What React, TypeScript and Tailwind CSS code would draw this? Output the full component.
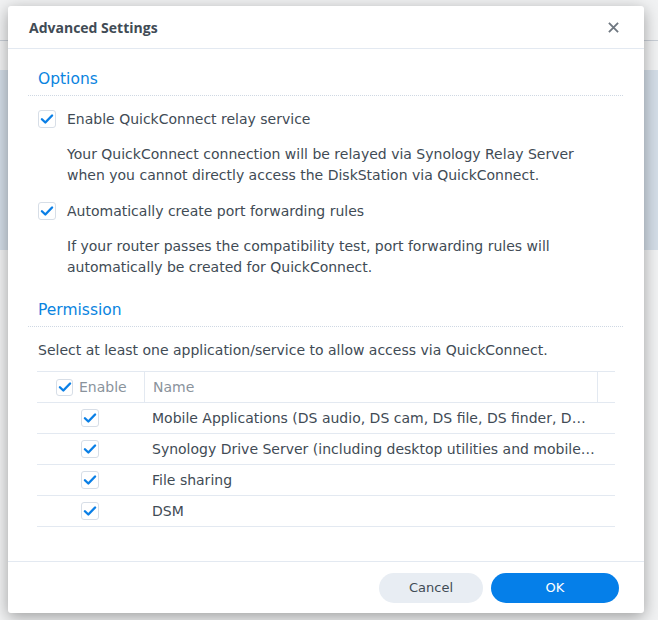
import React from "react";

const font = { fontFamily: '"DejaVu Sans", Verdana, sans-serif' };

const Check: React.FC<{ size?: string }> = ({ size = "w-[18px] h-[18px]" }) => (
	<span
		className={`${size} shrink-0 rounded-[3px] border border-[#d7dee7] bg-white flex items-center justify-center`}
	>
		<svg viewBox="0 0 16 16" className="w-[14px] h-[14px]">
			<path
				d="M2.2 8.3 L6.1 12 L13.8 4"
				fill="none"
				stroke="#0a7fe6"
				strokeWidth="2.7"
				strokeLinecap="round"
				strokeLinejoin="round"
			/>
		</svg>
	</span>
);

const options = [
	{
		label: "Enable QuickConnect relay service",
		desc: [
			"Your QuickConnect connection will be relayed via Synology Relay Server",
			"when you cannot directly access the DiskStation via QuickConnect.",
		],
		mb: "mb-[15px]",
	},
	{
		label: "Automatically create port forwarding rules",
		desc: [
			"If your router passes the compatibility test, port forwarding rules will",
			"automatically be created for QuickConnect.",
		],
		mb: "mb-[2px]",
	},
];

const apps = [
	{
		name: "Mobile Applications (DS audio, DS cam, DS file, DS finder, DS get, DS note, DS photo, DS video)",
		w: "w-[449px]",
	},
	{
		name: "Synology Drive Server (including desktop utilities and mobile applications)",
		w: "w-[452px]",
	},
	{ name: "File sharing", w: "w-[452px]" },
	{ name: "DSM", w: "w-[452px]" },
];

const Section: React.FC<{ title: string }> = ({ title }) => (
	<div className="pt-[18px]">
		<div className="text-[15.5px] leading-[24px] text-[#0a84e0] px-[10px]">{title}</div>
		<div className="mt-[4px] border-b border-dotted border-[#cfd8e3]" />
	</div>
);

export default function App() {
	return (
		<div
			className="relative w-[658px] h-[620px] bg-[#f1f2f3] overflow-hidden text-[#414b55]"
			style={font}
		>
			{/* page behind the dialog */}
			<div className="absolute left-0 right-0 top-[70px] h-[180px] bg-[#d3dde7]" />
			<div className="absolute left-0 right-0 top-[40px] border-t border-[#c8ced6]" />

			<div className="absolute left-[8px] top-[6px] w-[636px] h-[607px] bg-white rounded-[3px] shadow-[0_4px_16px_rgba(0,0,0,0.35)] flex flex-col">
				<div className="h-[43px] shrink-0 flex items-center justify-between pl-[21px] pr-[25px] border-b border-[#e3e9f1]">
					<span
						className="text-[14px] font-bold text-[#414b55]"
						style={{ fontFamily: '"Open Sans", sans-serif' }}
					>
						Advanced Settings
					</span>
					<svg viewBox="0 0 12 12" className="w-[11px] h-[11px]">
						<path d="M1 1 L11 11 M11 1 L1 11" stroke="#6f7780" strokeWidth="2" />
					</svg>
				</div>

				<div className="flex-1 pl-[20px] pr-[21px] text-[14px]">
					<Section title="Options" />
					<div className="px-[10px] pt-[13px]">
						{options.map((o) => (
							<div key={o.label} className={o.mb}>
								<div className="flex items-center gap-[11px] h-[20px]">
									<Check />
									<span className="text-[#414b55]">{o.label}</span>
								</div>
								<div className="pl-[29px] mt-[15px] leading-[21px] text-[#414b55]">
									{o.desc.map((d) => (
										<div key={d}>{d}</div>
									))}
								</div>
							</div>
						))}
					</div>

					<Section title="Permission" />
					<div className="px-[10px] pt-[13px]">
						<div className="leading-[20px]">
							Select at least one application/service to allow access via QuickConnect.
						</div>
						<div className="mt-[11px] -ml-px w-[578px] border-t border-[#e3e9f1]">
							<div className="flex h-[31px] border-b border-[#e3e9f1] text-[#8a939c]">
								<div className="w-[108px] flex items-center gap-[6px] pl-[19px] border-r border-[#e3e9f1]">
									<Check size="w-[17px] h-[17px]" />
									<span>Enable</span>
								</div>
								<div className="flex-1 flex items-center pl-[8px] border-r border-[#e3e9f1]">Name</div>
								<div className="w-[17px]" />
							</div>
							{apps.map((a) => (
								<div key={a.name} className="flex h-[31px] border-b border-[#e3e9f1] items-center">
									<div className="w-[108px] pl-[44px] flex">
										<Check />
									</div>
									<div className={`${a.w} pl-[7px] truncate`}>{a.name}</div>
								</div>
							))}
						</div>
					</div>
				</div>

				<div className="h-[52px] shrink-0 border-t border-[#e3e9f1] flex items-center justify-end gap-[8px] pr-[25px] text-[13px]">
					<button className="w-[104px] h-[30px] rounded-full bg-[#e8edf3] text-[#414b55]">Cancel</button>
					<button className="w-[128px] h-[30px] rounded-full bg-[#057fe9] text-white">OK</button>
				</div>
			</div>
		</div>
	);
}
